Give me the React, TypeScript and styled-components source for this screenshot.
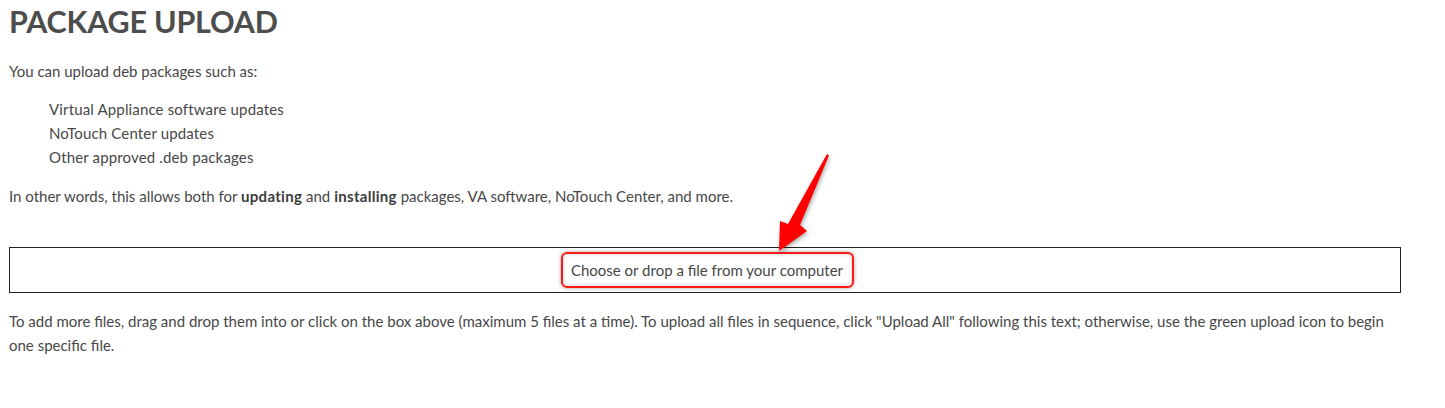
import styled, { createGlobalStyle } from 'styled-components';

const GlobalStyle = createGlobalStyle`
    html, body {
        margin: 0;
        padding: 0;
        background: #ffffff;
    }
    body {
        font-family: Lato, "Open Sans", Arial, sans-serif;
        color: #4a4a4a;
    }
`;

const Page = styled.div`
    position: relative;
    width: 1445px;
    height: 408px;
    box-sizing: border-box;
    padding: 0 44px 0 9px;
    overflow: hidden;
`;

const Title = styled.h1`
    margin: 0;
    padding-top: 3px;
    font-size: 30.5px;
    line-height: 36px;
    font-weight: 700;
    color: #4d4d4d;
    letter-spacing: -0.2px;
`;

const Paragraph = styled.p<{ $top?: number }>`
    margin: ${p => p.$top ?? 0}px 0 0 0;
    font-size: 15px;
    line-height: 24px;
    color: #474747;

    strong {
        font-weight: 700;
        color: #3d3d3d;
        letter-spacing: 0.3px;
    }
`;

const PackageList = styled.ul`
    list-style: none;
    margin: 14px 0 0 0;
    padding: 0 0 0 40px;
    font-size: 15px;
    line-height: 24px;
    color: #474747;
    letter-spacing: 0.15px;
`;

const DropZone = styled.div`
    margin-top: 39px;
    height: 46px;
    border: 1px solid #222;
    box-sizing: border-box;
    display: flex;
    align-items: center;
    justify-content: center;
    cursor: pointer;
`;

const DropLabel = styled.span`
    margin-left: 5px;
    font-size: 15px;
    color: #474747;
    padding: 7px 9px 7px 8px;
    border: 2px solid #ff1a1a;
    border-radius: 6px;
    box-shadow: 0 0 4px rgba(0, 0, 0, 0.35), inset 0 0 4px rgba(0, 0, 0, 0.2);
    line-height: 18px;
`;

const Arrow = styled.svg`
    position: absolute;
    left: 770px;
    top: 150px;
    width: 66px;
    height: 106px;
    overflow: visible;
    filter: drop-shadow(1px 2px 2px rgba(0, 0, 0, 0.35));
`;

export default function App() {
    return (
        <>
            <GlobalStyle />
            <Page>
                <Title>PACKAGE UPLOAD</Title>
                <Paragraph $top={20}>You can upload deb packages such as:</Paragraph>
                <PackageList>
                    <li>Virtual Appliance software updates</li>
                    <li>NoTouch Center updates</li>
                    <li>Other approved .deb packages</li>
                </PackageList>
                <Paragraph $top={15}>
                    In other words, this allows both for <strong>updating</strong> and{' '}
                    <strong>installing</strong> packages, VA software, NoTouch Center, and more.
                </Paragraph>
                <DropZone>
                    <DropLabel>Choose or drop a file from your computer</DropLabel>
                </DropZone>
                <Paragraph $top={16}>
                    To add more files, drag and drop them into or click on the box above (maximum 5 files at a time). To upload all files in sequence, click "Upload All" following this text; otherwise, use the green upload icon to begin one specific file.
                </Paragraph>
                {/* annotation arrow pointing to the drop label */}
                <Arrow viewBox="0 0 66 106">
                    <path
                        d="M57 4 L59 5.5 L30 75 L37 81 L9 101 L10 71 L18 74 Z"
                        fill="#ff0000"
                    />
                </Arrow>
            </Page>
        </>
    );
}
